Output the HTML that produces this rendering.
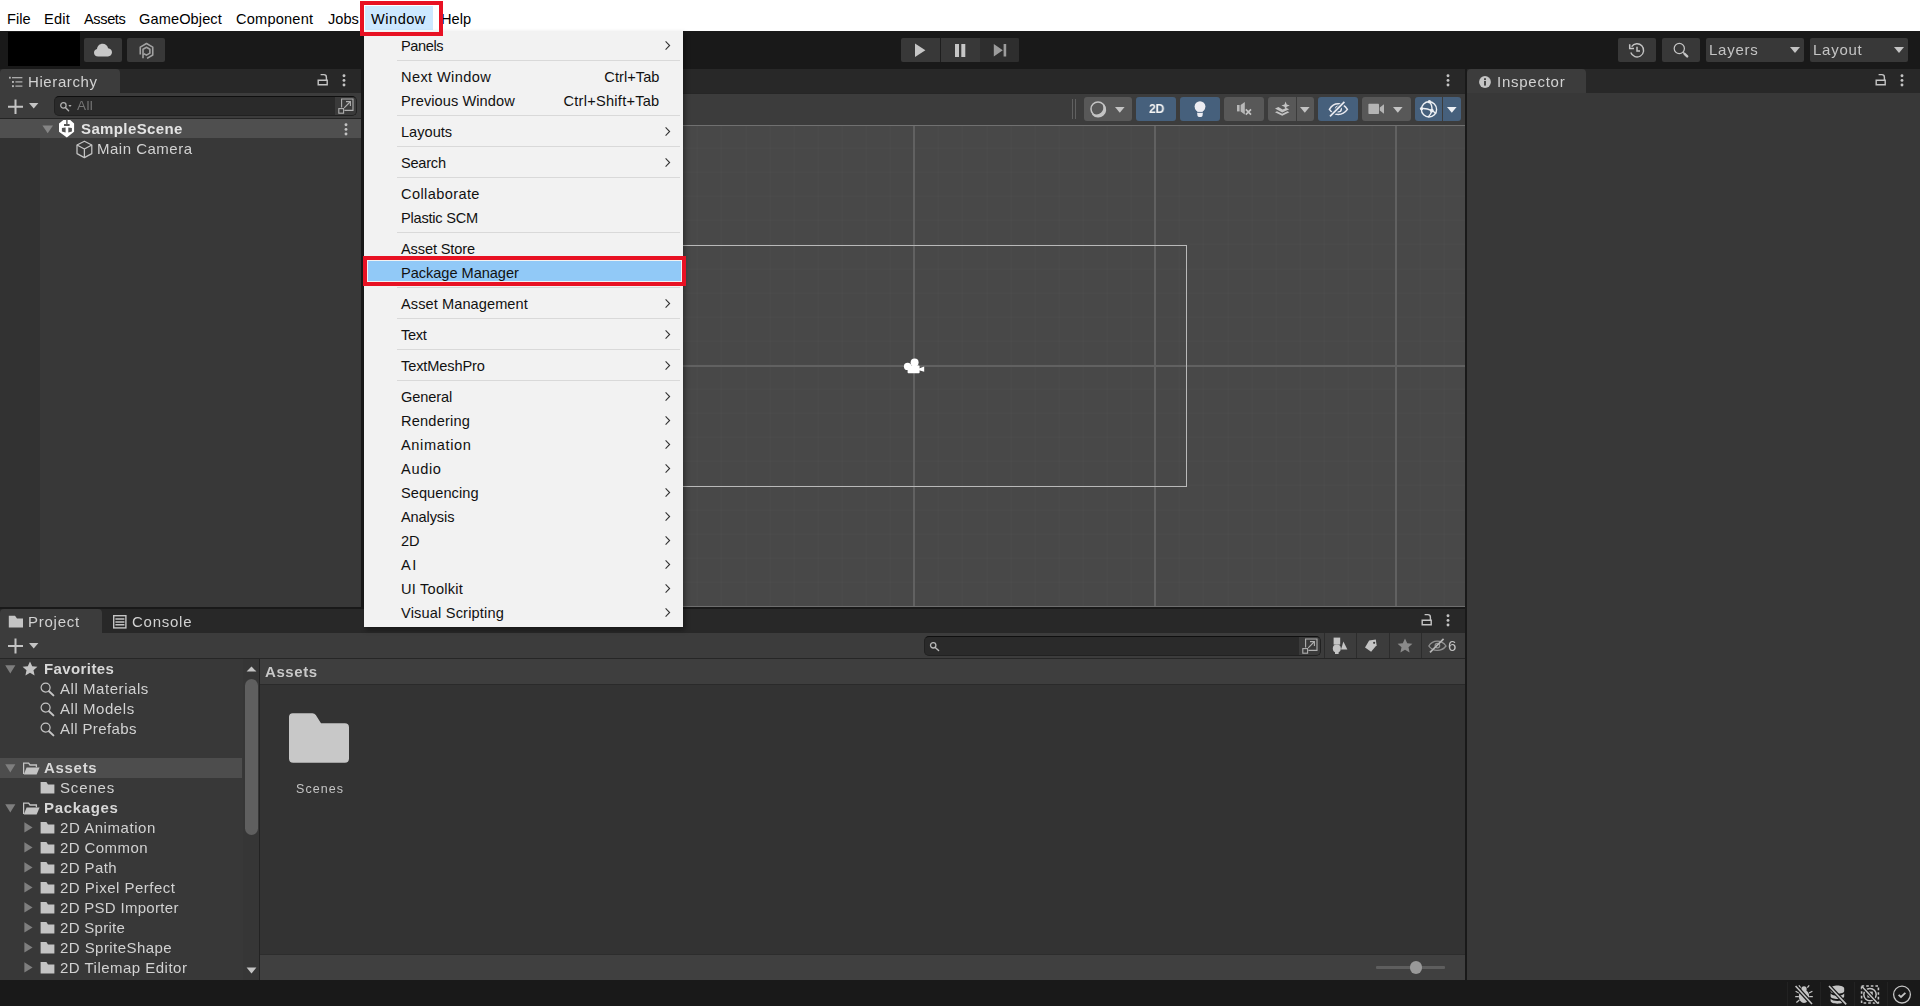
<!DOCTYPE html>
<html lang="en">
<head>
<meta charset="utf-8">
<title>Unity - Window - Package Manager</title>
<style>
*{box-sizing:border-box;margin:0;padding:0}
html,body{width:1920px;height:1006px;overflow:hidden;background:#191919}
body{position:relative;font-family:"Liberation Sans",sans-serif;font-size:15px;color:#d2d2d2;-webkit-font-smoothing:antialiased}
.abs{position:absolute}
.t{position:absolute;white-space:nowrap;line-height:20px;height:20px}
/* menubar */
#menubar{left:0;top:0;width:1920px;height:31px;background:#fff}
#menubar .t{color:#000;font-size:14.6px;top:9px}
/* app toolbar */
#apptb{left:0;top:31px;width:1920px;height:38px;background:#191919}
.tbtn{position:absolute;background:#383838;border-radius:2px}
/* panels */
.panel{position:absolute;background:#383838}
.panel .t,#apptb .t{will-change:transform}
.tabstrip{position:absolute;left:0;top:0;right:0;height:24px;background:#282828}
.tab{position:absolute;top:0;height:24px;background:#3c3c3c;border-radius:4px 4px 0 0}
.ptb{position:absolute;left:0;right:0;background:#3c3c3c}
.ui{letter-spacing:.55px;color:#d2d2d2}
.sbtn{position:absolute;top:97px;height:24px;border-radius:3px;background:#585858}
.sbtn.on{background:#46607c}
/* menu */
#menu{left:364px;top:31px;width:319px;height:596px;background:#f2f2f2;box-shadow:2px 3px 5px rgba(0,0,0,.38)}
#menu .t{color:#111;font-size:14.6px;left:37px}
#menu .sc{left:auto;right:23.5px}
#menu .sep{position:absolute;left:33px;width:283px;height:1px;background:#d9d9d9}
#menu .arr{position:absolute;left:300px;width:7px;height:11px}
</style>
</head>
<body>

<!-- ============ MENUBAR ============ -->
<div id="menubar" class="abs">
  <span class="t" style="left:7px">File</span>
  <span class="t" style="left:44px;letter-spacing:0.25px">Edit</span>
  <span class="t" style="left:84px;letter-spacing:-0.4px">Assets</span>
  <span class="t" style="left:139px;letter-spacing:0.1px">GameObject</span>
  <span class="t" style="left:236px;letter-spacing:0.2px">Component</span>
  <span class="t" style="left:328px">Jobs</span>
  <div class="abs" style="left:365px;top:6px;width:68px;height:24px;background:#cce8ff"></div>
  <span class="t" style="left:371px;letter-spacing:0.5px">Window</span>
  <span class="t" style="left:441px">Help</span>
</div>

<!-- ============ APP TOOLBAR ============ -->
<div id="apptb" class="abs">
  <div class="abs" style="left:8px;top:1px;width:72px;height:34px;background:#000"></div>
  <div class="tbtn" style="left:84px;top:7px;width:38px;height:24px">
    <svg class="abs" style="left:9px;top:5px" width="20" height="14" viewBox="0 0 20 14"><path d="M5.2 13.4 C2.6 13.4 1 11.8 1 9.7 C1 7.8 2.3 6.4 4 6.1 C4.3 3 6.6 .8 9.6 .8 C12.3 .8 14.5 2.6 15.1 5.2 C17.4 5.4 19 7 19 9.3 C19 11.6 17.3 13.4 15 13.4 Z" fill="#c8c8c8"/></svg>
  </div>
  <div class="tbtn" style="left:127px;top:7px;width:38px;height:24px">
    <svg class="abs" style="left:10.5px;top:4px" width="17" height="18" viewBox="0 0 18 19"><g fill="none" stroke="#a2a2a2" stroke-width="1.7" stroke-linejoin="round"><path d="M9.6 17.3 L15.6 13.8 V5.4 L9 1.6 L2.4 5.4 V13.2"/><path d="M5.3 17.2 V7.6 L9 5.5 L12.6 7.6 V11.8 L9 13.9 L6.2 12.4"/></g></svg>
  </div>
  <div class="tbtn" style="left:901px;top:7px;width:118px;height:24px;overflow:hidden">
    <div class="abs" style="left:39px;top:0;width:1px;height:24px;background:#1e1e1e"></div>
    <div class="abs" style="left:79px;top:0;width:39px;height:24px;background:#2e2e2e"></div>
    <svg class="abs" style="left:0;top:0" width="118" height="24" viewBox="0 0 118 24"><path d="M14 5.6 V19 L24.4 12.3 Z" fill="#c6c6c6"/><path d="M54 6 h4 v13 h-4 Z M60.3 6 h4 v13 h-4 Z" fill="#c6c6c6"/><path d="M92.8 6 V18.6 L101.8 12.3 Z M102.6 6 h2.6 v12.6 h-2.6 Z" fill="#9c9c9c"/></svg>
  </div>
  <div class="tbtn" style="left:1618px;top:7px;width:38px;height:24px">
    <svg class="abs" style="left:10px;top:4px" width="18" height="17" viewBox="0 0 18 17"><g fill="none" stroke="#c4c4c4" stroke-width="1.4"><path d="M3.6 4.6 A6.6 6.6 0 1 1 2.8 10.6"/><path d="M9 4.8 V9 H12" stroke-width="1.5"/></g><path d="M1.7 2.2 V6.6 H6" fill="none" stroke="#c4c4c4" stroke-width="1.5"/></svg>
  </div>
  <div class="tbtn" style="left:1662px;top:7px;width:38px;height:24px">
    <svg class="abs" style="left:10px;top:4px" width="18" height="17" viewBox="0 0 18 17"><circle cx="7.3" cy="6.5" r="5.1" fill="none" stroke="#c4c4c4" stroke-width="1.25"/><path d="M10.9 10.1 L12.4 11.6" stroke="#c4c4c4" stroke-width="1.2"/><path d="M12.6 11.8 L15.2 14.4" stroke="#c4c4c4" stroke-width="2.4" stroke-linecap="round"/></svg>
  </div>
  <div class="tbtn" style="left:1706px;top:7px;width:98px;height:24px">
    <span class="t ui" style="left:3px;top:2px;color:#c4c4c4;letter-spacing:.75px">Layers</span>
    <svg class="abs" style="left:84px;top:9px" width="10" height="6" viewBox="0 0 10 6"><path d="M0 0 H10 L5 6 Z" fill="#c4c4c4"/></svg>
  </div>
  <div class="tbtn" style="left:1810px;top:7px;width:98px;height:24px">
    <span class="t ui" style="left:3px;top:2px;color:#c4c4c4;letter-spacing:.75px">Layout</span>
    <svg class="abs" style="left:84px;top:9px" width="10" height="6" viewBox="0 0 10 6"><path d="M0 0 H10 L5 6 Z" fill="#c4c4c4"/></svg>
  </div>
</div>

<!-- ============ HIERARCHY ============ -->
<div id="hier" class="panel" style="left:0;top:69px;width:361px;height:538px">
  <div class="abs" style="left:0;top:69px;width:40px;height:469px;background:#323232"></div>
  <div class="tabstrip"></div>
  <div class="tab" style="left:0;width:120px">
    <svg class="abs" style="left:9px;top:7px" width="14" height="12" viewBox="0 0 14 12"><g fill="#b6b6b6"><rect x="0" y=".8" width="1.8" height="1.8"/><rect x="3" y="1.1" width="10.4" height="1.2"/><rect x="3" y="5" width="1.9" height="1.9"/><rect x="6.4" y="5.3" width="7" height="1.2"/><rect x="3" y="9.2" width="1.9" height="1.9"/><rect x="6.4" y="9.5" width="7" height="1.2"/></g></svg>
    <span class="t ui" style="left:28px;top:3px;letter-spacing:.6px">Hierarchy</span>
  </div>
  <svg class="abs" style="left:317px;top:4px" width="12" height="13" viewBox="0 0 12 13"><path d="M1.2 7.2 H10.2 V11.8 H1.2 Z" fill="none" stroke="#c4c4c4" stroke-width="1.4"/><path d="M9.4 7 V4.2 A2.6 2.6 0 0 0 6.8 1.6 H3.6" fill="none" stroke="#c4c4c4" stroke-width="1.4"/></svg>
  <svg class="abs" style="left:342px;top:5px" width="4" height="13" viewBox="0 0 4 13"><circle cx="2" cy="1.8" r="1.45" fill="#c4c4c4"/><circle cx="2" cy="6.4" r="1.45" fill="#c4c4c4"/><circle cx="2" cy="11" r="1.45" fill="#c4c4c4"/></svg>
  <div class="ptb" style="top:24px;height:26px;border-bottom:1px solid #242424"></div>
  <svg class="abs" style="left:7px;top:30px" width="17" height="16" viewBox="0 0 17 16"><path d="M8.5 .6 V15 M1 7.8 H16" stroke="#c4c4c4" stroke-width="2" fill="none"/></svg>
  <svg class="abs" style="left:29px;top:34px" width="10" height="6" viewBox="0 0 10 6"><path d="M0 0 H9.4 L4.7 5.4 Z" fill="#c4c4c4"/></svg>
  <div class="abs" style="left:54px;top:27px;width:303px;height:20px;background:#2a2a2a;border:1px solid #212121;border-top-color:#0f0f0f;border-radius:5px;overflow:hidden">
    <div class="abs" style="left:280px;top:0;width:22px;height:18px;background:#3a3a3a"></div>
  </div>
  <svg class="abs" style="left:59px;top:32px" width="14" height="11" viewBox="0 0 14 11"><circle cx="4.4" cy="4.4" r="2.7" fill="none" stroke="#b0b0b0" stroke-width="1.25"/><path d="M6.4 6.6 L9.6 9.8" stroke="#b0b0b0" stroke-width="1.4" stroke-linecap="round"/><path d="M9.4 4 H12.6 L11 5.9 Z" fill="#b0b0b0"/></svg>
  <span class="t" style="left:77px;top:27px;font-size:13.5px;color:#757575;letter-spacing:.4px">All</span>
  <svg class="abs" style="left:338px;top:29px" width="16" height="16" viewBox="0 0 16 16"><g fill="none" stroke="#b0b0b0" stroke-width="1.1"><path d="M3.6 9.6 V1 H15 V12.4 H6.4"/><rect x=".8" y="10.6" width="4.8" height="4.6"/><path d="M6.2 9.8 L12 4"/><path d="M8 3.6 H12.4 V8"/></g></svg>

  <div class="abs" style="left:0;top:50px;width:361px;height:19px;background:#4f4f4f"></div>
  <svg class="abs" style="left:42px;top:56px" width="12" height="9" viewBox="0 0 12 9"><path d="M.4 .4 H11 L5.7 8.2 Z" fill="#858585"/></svg>
  <svg class="abs" style="left:58px;top:50px" width="18" height="19" viewBox="0 0 18 19"><path d="M5.4 1 H12.2 L16.1 4.6 V12.8 L12.6 15.4 L8.8 18.6 L4.8 15.4 L1 12.8 V4.6 Z" fill="#fff"/><path d="M8.2 .6 H9.6 V4.9 H11.6 V7 H6 V4.9 H8.2 Z" fill="#555"/><path d="M3.9 9 L7.6 8.6 V13.6 L3.9 12.6 Z M13.9 9 L10.3 8.6 V13.6 L13.9 12.6 Z" fill="#555"/></svg>
  <span class="t" style="left:81px;top:50px;font-weight:bold;color:#e4e4e4;letter-spacing:.38px">SampleScene</span>
  <svg class="abs" style="left:344px;top:54px" width="4" height="13" viewBox="0 0 4 13"><circle cx="2" cy="1.8" r="1.45" fill="#c4c4c4"/><circle cx="2" cy="6.4" r="1.45" fill="#c4c4c4"/><circle cx="2" cy="11" r="1.45" fill="#c4c4c4"/></svg>
  <svg class="abs" style="left:75px;top:71px" width="19" height="19" viewBox="0 0 19 19"><g fill="none" stroke="#c4c4c4" stroke-width="1.25" stroke-linejoin="round"><path d="M9.4 1.2 L16.8 5 V13.6 L9.4 17.6 L2 13.6 V5 Z"/><path d="M2 5 L9.4 9 L16.8 5 M9.4 9 V17.6"/></g></svg>
  <span class="t ui" style="left:97px;top:70px;letter-spacing:.5px">Main Camera</span>
</div>

<!-- ============ SCENE ============ -->
<div id="scene" class="panel" style="left:364px;top:69px;width:1101px;height:538px;background:#484848;overflow:hidden">
  <!-- grid -->
  <div class="abs" style="left:0;top:56px;width:1101px;height:482px;background-image:repeating-linear-gradient(90deg,rgba(255,255,255,.014) 0,rgba(255,255,255,.014) 1px,transparent 1px,transparent 24.1px),repeating-linear-gradient(0deg,rgba(255,255,255,.014) 0,rgba(255,255,255,.014) 1px,transparent 1px,transparent 24.1px);background-position:19.8px 0,0 -0.4px"></div>
  <div class="abs" style="left:308px;top:56px;width:2px;height:482px;background:#616161"></div>
  <div class="abs" style="left:549px;top:56px;width:2px;height:482px;background:#616161"></div>
  <div class="abs" style="left:790px;top:56px;width:2px;height:482px;background:#616161"></div>
  <div class="abs" style="left:1031px;top:56px;width:2px;height:482px;background:#616161"></div>
  <div class="abs" style="left:0;top:56px;width:1101px;height:1px;background:#707070"></div>
  <div class="abs" style="left:0;top:296px;width:1101px;height:2px;background:#616161"></div>
  <div class="abs" style="left:0;top:537px;width:1101px;height:1px;background:#6e6e6e"></div>
  <!-- camera frustum rect -->
  <div class="abs" style="left:278px;top:176px;width:545px;height:242px;border:1px solid #b9b9b9"></div>
  <!-- camera gizmo -->
  <svg class="abs" style="left:538px;top:288px" width="24" height="18" viewBox="0 0 24 18"><g fill="#fff"><circle cx="5.6" cy="9.4" r="3.7"/><circle cx="12.6" cy="5.6" r="4"/><rect x="5.6" y="8.6" width="12" height="7.6" rx=".8"/><path d="M17 11.4 L22.2 9.6 V14.8 L17 13.2 Z"/></g></svg>

  <div class="tabstrip"></div>
  <svg class="abs" style="left:1082px;top:5px" width="4" height="13" viewBox="0 0 4 13"><circle cx="2" cy="1.8" r="1.45" fill="#c4c4c4"/><circle cx="2" cy="6.4" r="1.45" fill="#c4c4c4"/><circle cx="2" cy="11" r="1.45" fill="#c4c4c4"/></svg>
  <div class="ptb" style="top:24px;height:32px;border-top:1px solid #262626"></div>
  <div class="abs" style="left:708px;top:30px;width:1px;height:20px;background:#606060"></div>
  <div class="abs" style="left:711px;top:30px;width:1px;height:20px;background:#606060"></div>

  <div class="sbtn" style="left:720px;top:28px;width:48px">
    <svg class="abs" style="left:5px;top:3px" width="18" height="18" viewBox="0 0 18 18"><circle cx="9" cy="9" r="7" fill="none" stroke="#c4c4c4" stroke-width="1.5"/><path d="M14.6 5 A7 7 0 0 1 4 14.4 A7.6 7.6 0 0 0 14.6 5 Z" fill="#c4c4c4" stroke="#c4c4c4" stroke-width="1.6" stroke-linejoin="round"/></svg>
    <svg class="abs" style="left:31px;top:10px" width="10" height="6" viewBox="0 0 10 6"><path d="M0 0 H9.6 L4.8 5.8 Z" fill="#c4c4c4"/></svg>
  </div>
  <div class="sbtn on" style="left:772px;top:28px;width:40px">
    <span class="t" style="left:12.5px;top:2px;font-weight:bold;font-size:13.6px;color:#f4f4f4;letter-spacing:-.3px;transform:scaleX(.9);transform-origin:0 50%">2D</span>
  </div>
  <div class="sbtn on" style="left:816px;top:28px;width:40px">
    <svg class="abs" style="left:12px;top:3px" width="16" height="18" viewBox="0 0 16 18"><circle cx="8" cy="6.6" r="5.4" fill="#ececf2"/><rect x="5.4" y="10" width="5.2" height="4" fill="#ececf2"/><circle cx="8" cy="14.4" r="2.7" fill="#ececf2"/><path d="M5.2 12.4 H10.8" stroke="#46607c" stroke-width=".9"/></svg>
  </div>
  <div class="sbtn" style="left:860px;top:28px;width:40px">
    <svg class="abs" style="left:12px;top:4px" width="18" height="16" viewBox="0 0 18 16"><g fill="#b8b8b8"><rect x="1" y="4" width="2.6" height="6.4"/><path d="M4.6 4 L8.8 1 V13.4 L4.6 10.4 Z"/></g><path d="M9.8 8.4 L15 13.6 M15 8.4 L9.8 13.6" stroke="#c4c4c4" stroke-width="1.7"/></svg>
  </div>
  <div class="sbtn" style="left:904px;top:28px;width:46px">
    <div class="abs" style="left:28px;top:0;width:1px;height:24px;background:#3c3c3c"></div>
    <svg class="abs" style="left:6px;top:4px" width="17" height="16" viewBox="0 0 17 16"><g fill="#c4c4c4"><path d="M11.6 .4 L12.7 3.5 L15.8 4.6 L12.7 5.7 L11.6 8.8 L10.5 5.7 L7.4 4.6 L10.5 3.5 Z"/><path d="M1 7.6 L4.4 6 L8.6 8.6 L12.4 7 L15.2 8.2 L8.2 11.4 Z"/><path d="M1 11.2 L3 10.2 L8.2 12.8 L13.4 10.2 L15.4 11.2 L8.2 14.8 Z"/></g></svg>
    <svg class="abs" style="left:32px;top:10px" width="10" height="6" viewBox="0 0 10 6"><path d="M0 0 H9.6 L4.8 5.8 Z" fill="#c4c4c4"/></svg>
  </div>
  <div class="sbtn on" style="left:954px;top:28px;width:40px">
    <svg class="abs" style="left:10px;top:4px" width="21" height="16" viewBox="0 0 21 16"><path d="M1.4 8.4 C4 4 7 2.8 10.2 2.8 C13.6 2.8 16.8 4.4 19.4 8.4 C16.8 12 13.6 13.4 10.2 13.4 C7 13.4 4 12.2 1.4 8.4 Z" fill="none" stroke="#eaeaf0" stroke-width="1.5"/><circle cx="10.4" cy="8" r="2.9" fill="none" stroke="#eaeaf0" stroke-width="1.4"/><path d="M2.6 14.8 L16.6 1" stroke="#46607c" stroke-width="4"/><path d="M2 15.4 L16.4 .8" stroke="#eaeaf0" stroke-width="1.7"/></svg>
  </div>
  <div class="sbtn" style="left:998px;top:28px;width:49px">
    <svg class="abs" style="left:6px;top:6px" width="17" height="12" viewBox="0 0 17 12"><rect x=".4" y=".8" width="10.6" height="10.2" rx=".8" fill="#b4b4b4"/><path d="M11.8 4.4 L16 1.2 V10.8 L11.8 7.6 Z" fill="#b4b4b4"/></svg>
    <svg class="abs" style="left:31px;top:10px" width="10" height="6" viewBox="0 0 10 6"><path d="M0 0 H9.6 L4.8 5.8 Z" fill="#c4c4c4"/></svg>
  </div>
  <div class="sbtn on" style="left:1051px;top:28px;width:46px">
    <div class="abs" style="left:27px;top:0;width:1px;height:24px;background:#3c3c3c"></div>
    <svg class="abs" style="left:4px;top:2px" width="20" height="20" viewBox="0 0 20 20"><g fill="none" stroke="#eef0f4" stroke-width="1.4"><circle cx="10" cy="10.4" r="7.6"/><path d="M10.4 2.8 C13 5.6 13.4 8 12.8 11.6 C12.2 14.6 10.6 16.6 9.2 18"/><path d="M2.4 9.6 C5.4 9.2 9 9.8 12.8 11.6 C14.6 12.4 16 13.4 17 14.6"/></g><g fill="#eef0f4"><circle cx="10.4" cy="2.8" r="1.7"/><circle cx="2.6" cy="9.6" r="1.7"/><circle cx="12.8" cy="11.6" r="1.9"/></g></svg>
    <svg class="abs" style="left:32px;top:10px" width="10" height="6" viewBox="0 0 10 6"><path d="M0 0 H9.6 L4.8 5.8 Z" fill="#eef0f4"/></svg>
  </div>
</div>

<!-- ============ INSPECTOR ============ -->
<div id="insp" class="panel" style="left:1467px;top:69px;width:453px;height:911px">
  <div class="tabstrip"></div>
  <div class="tab" style="left:0;width:119px">
    <svg class="abs" style="left:12px;top:7px" width="12" height="12" viewBox="0 0 13 13"><circle cx="6.5" cy="6.5" r="6.4" fill="#c4c4c4"/><rect x="5.5" y="5.4" width="2" height="5" fill="#3c3c3c"/><rect x="5.5" y="2.4" width="2" height="2" fill="#3c3c3c"/></svg>
    <span class="t ui" style="left:30px;top:3px;letter-spacing:.75px">Inspector</span>
  </div>
  <svg class="abs" style="left:408px;top:4px" width="12" height="13" viewBox="0 0 12 13"><path d="M1.2 7.2 H10.2 V11.8 H1.2 Z" fill="none" stroke="#c4c4c4" stroke-width="1.4"/><path d="M9.4 7 V4.2 A2.6 2.6 0 0 0 6.8 1.6 H3.6" fill="none" stroke="#c4c4c4" stroke-width="1.4"/></svg>
  <svg class="abs" style="left:433px;top:5px" width="4" height="13" viewBox="0 0 4 13"><circle cx="2" cy="1.8" r="1.45" fill="#c4c4c4"/><circle cx="2" cy="6.4" r="1.45" fill="#c4c4c4"/><circle cx="2" cy="11" r="1.45" fill="#c4c4c4"/></svg>
</div>

<!-- ============ PROJECT ============ -->
<div id="proj" class="panel" style="left:0;top:609px;width:1465px;height:371px">
  <div class="tabstrip"></div>
  <div class="tab" style="left:0;width:102px">
    <svg class="abs" style="left:8px;top:6px" width="16" height="13" viewBox="0 0 16 13"><path d="M.8 .8 H7 L9 3.6 H15 V12.6 H.8 Z" fill="#c4c4c4"/></svg>
    <span class="t ui" style="left:28px;top:3px;letter-spacing:.75px">Project</span>
  </div>
  <svg class="abs" style="left:113px;top:6px" width="14" height="14" viewBox="0 0 14 14"><rect x=".7" y=".7" width="12.2" height="12.2" fill="none" stroke="#c4c4c4" stroke-width="1.4"/><path d="M2.4 4 H11.4 M2.4 6.9 H11.4 M2.4 9.8 H11.4" stroke="#c4c4c4" stroke-width="1.5"/></svg>
  <span class="t ui" style="left:132px;top:3px;letter-spacing:.75px">Console</span>
  <svg class="abs" style="left:1421px;top:4px" width="12" height="13" viewBox="0 0 12 13"><path d="M1.2 7.2 H10.2 V11.8 H1.2 Z" fill="none" stroke="#c4c4c4" stroke-width="1.4"/><path d="M9.4 7 V4.2 A2.6 2.6 0 0 0 6.8 1.6 H3.6" fill="none" stroke="#c4c4c4" stroke-width="1.4"/></svg>
  <svg class="abs" style="left:1446px;top:5px" width="4" height="13" viewBox="0 0 4 13"><circle cx="2" cy="1.8" r="1.45" fill="#c4c4c4"/><circle cx="2" cy="6.4" r="1.45" fill="#c4c4c4"/><circle cx="2" cy="11" r="1.45" fill="#c4c4c4"/></svg>
  <div class="ptb" style="top:24px;height:26px;border-bottom:1px solid #262626"></div>
  <svg class="abs" style="left:7px;top:29px" width="17" height="16" viewBox="0 0 17 16"><path d="M8.5 .6 V15.6 M1 8.1 H16" stroke="#c4c4c4" stroke-width="2" fill="none"/></svg>
  <svg class="abs" style="left:29px;top:34px" width="10" height="6" viewBox="0 0 10 6"><path d="M0 0 H9.4 L4.7 5.4 Z" fill="#c4c4c4"/></svg>
  <div class="abs" style="left:924px;top:27px;width:397px;height:20px;background:#2a2a2a;border:1px solid #212121;border-top-color:#0f0f0f;border-radius:5px;overflow:hidden">
    <div class="abs" style="left:374px;top:0;width:22px;height:18px;background:#3a3a3a"></div>
  </div>
  <svg class="abs" style="left:929px;top:32px" width="12" height="11" viewBox="0 0 12 11"><circle cx="4.2" cy="4.3" r="2.7" fill="none" stroke="#b8b8b8" stroke-width="1.3"/><path d="M6.2 6.4 L9.6 9.6" stroke="#b8b8b8" stroke-width="1.4" stroke-linecap="round"/></svg>
  <svg class="abs" style="left:1302px;top:29px" width="16" height="16" viewBox="0 0 16 16"><g fill="none" stroke="#b0b0b0" stroke-width="1.1"><path d="M3.6 9.6 V1 H15 V12.4 H6.4"/><rect x=".8" y="10.6" width="4.8" height="4.6"/><path d="M6.2 9.8 L12 4"/><path d="M8 3.6 H12.4 V8"/></g></svg>
  <!-- toolbar buttons -->
  <div class="abs" style="left:1324px;top:24px;width:1px;height:25px;background:#2c2c2c"></div>
  <div class="abs" style="left:1356px;top:24px;width:1px;height:25px;background:#2c2c2c"></div>
  <div class="abs" style="left:1389px;top:24px;width:1px;height:25px;background:#2c2c2c"></div>
  <div class="abs" style="left:1421px;top:24px;width:1px;height:25px;background:#2c2c2c"></div>
  <svg class="abs" style="left:1331px;top:28px" width="17" height="17" viewBox="0 0 17 17"><g fill="#c4c4c4"><rect x="2.6" y=".6" width="6.6" height="7"/><circle cx="5.8" cy="11.6" r="4"/><rect x="4" y="15" width="3.6" height="2"/><path d="M12.4 4.4 L16.4 12.4 H10 Z"/></g></svg>
  <svg class="abs" style="left:1364px;top:30px" width="14.5" height="13.6" viewBox="0 0 16 15"><path d="M6.6 1.4 H14 V7.6 L7 14 L1 8.4 Z" fill="#c4c4c4" transform="rotate(-8 8 8)"/><circle cx="11.2" cy="4.2" r="1.2" fill="#3c3c3c"/></svg>
  <svg class="abs" style="left:1397px;top:29px" width="16" height="15" viewBox="0 0 16 15"><path d="M8 .4 L10.2 5.2 L15.4 5.8 L11.5 9.3 L12.6 14.4 L8 11.8 L3.4 14.4 L4.5 9.3 L.6 5.8 L5.8 5.2 Z" fill="#8a8a8a"/></svg>
  <svg class="abs" style="left:1427px;top:28px" width="21" height="17" viewBox="0 0 21 17"><path d="M1.8 9 C4.2 5.4 7 4.2 10.2 4.2 C13.6 4.2 16.6 5.6 19 9 C16.6 12.2 13.6 13.4 10.2 13.4 C7 13.4 4.2 12.4 1.8 9 Z" fill="none" stroke="#929292" stroke-width="1.3"/><circle cx="10.4" cy="8.6" r="2.3" fill="none" stroke="#929292" stroke-width="1.2"/><path d="M3 15.4 L16.6 1.8" stroke="#b4b4b4" stroke-width="1.7"/></svg>
  <span class="t" style="left:1448px;top:27px;color:#c4c4c4;font-size:15px">6</span>

  <!-- tree -->
  <svg class="abs" style="left:5px;top:56px" width="11" height="9" viewBox="0 0 11 9"><path d="M.2 .2 H10.4 L5.3 8.6 Z" fill="#7e7e7e"/></svg><svg class="abs" style="left:22px;top:52px" width="16" height="15" viewBox="0 0 16 15"><path d="M8 .4 L10.2 5.2 L15.4 5.8 L11.5 9.3 L12.6 14.4 L8 11.8 L3.4 14.4 L4.5 9.3 L.6 5.8 L5.8 5.2 Z" fill="#c4c4c4"/></svg><span class="t ui" style="left:44px;top:50px;font-weight:bold;color:#d8d8d8;letter-spacing:0.4px">Favorites</span>
  <svg class="abs" style="left:40px;top:73px" width="15" height="15" viewBox="0 0 15 15"><circle cx="5.6" cy="5.6" r="4.5" fill="none" stroke="#c4c4c4" stroke-width="1.2"/><path d="M9 9.2 L13.4 13.4" stroke="#c4c4c4" stroke-width="2" stroke-linecap="round"/></svg><span class="t ui" style="left:60px;top:70px;letter-spacing:0.55px">All Materials</span>
  <svg class="abs" style="left:40px;top:93px" width="15" height="15" viewBox="0 0 15 15"><circle cx="5.6" cy="5.6" r="4.5" fill="none" stroke="#c4c4c4" stroke-width="1.2"/><path d="M9 9.2 L13.4 13.4" stroke="#c4c4c4" stroke-width="2" stroke-linecap="round"/></svg><span class="t ui" style="left:60px;top:90px;letter-spacing:0.55px">All Models</span>
  <svg class="abs" style="left:40px;top:113px" width="15" height="15" viewBox="0 0 15 15"><circle cx="5.6" cy="5.6" r="4.5" fill="none" stroke="#c4c4c4" stroke-width="1.2"/><path d="M9 9.2 L13.4 13.4" stroke="#c4c4c4" stroke-width="2" stroke-linecap="round"/></svg><span class="t ui" style="left:60px;top:110px;letter-spacing:0.4px">All Prefabs</span>
  <div class="abs" style="left:0;top:149px;width:242px;height:20px;background:#4d4d4d"></div>
  <svg class="abs" style="left:5px;top:155px" width="11" height="9" viewBox="0 0 11 9"><path d="M.2 .2 H10.4 L5.3 8.6 Z" fill="#7e7e7e"/></svg><svg class="abs" style="left:23px;top:153px" width="17" height="13" viewBox="0 0 17 13"><path d="M.6 12 V1.2 H5.6 L7 3 H13.4 V5.2" fill="none" stroke="#c4c4c4" stroke-width="1.3"/><path d="M3.6 5.6 H16.6 L13.6 12.4 H.8 Z" fill="#c4c4c4"/></svg><span class="t ui" style="left:44px;top:149px;font-weight:bold;color:#d8d8d8;letter-spacing:.7px">Assets</span>
  <svg class="abs" style="left:40px;top:172px" width="15" height="13" viewBox="0 0 15 13"><path d="M.6 1 H6.4 L8 3.4 H14.4 V12.4 H.6 Z" fill="#c4c4c4"/></svg><span class="t ui" style="left:60px;top:169px;letter-spacing:.85px">Scenes</span>
  <svg class="abs" style="left:5px;top:195px" width="11" height="9" viewBox="0 0 11 9"><path d="M.2 .2 H10.4 L5.3 8.6 Z" fill="#7e7e7e"/></svg><svg class="abs" style="left:23px;top:193px" width="17" height="13" viewBox="0 0 17 13"><path d="M.6 12 V1.2 H5.6 L7 3 H13.4 V5.2" fill="none" stroke="#c4c4c4" stroke-width="1.3"/><path d="M3.6 5.6 H16.6 L13.6 12.4 H.8 Z" fill="#c4c4c4"/></svg><span class="t ui" style="left:44px;top:189px;font-weight:bold;color:#d8d8d8;letter-spacing:.67px">Packages</span>
  <svg class="abs" style="left:24px;top:213px" width="9" height="11" viewBox="0 0 9 11"><path d="M.4 .3 V10.5 L8.6 5.4 Z" fill="#7e7e7e"/></svg><svg class="abs" style="left:40px;top:212px" width="15" height="13" viewBox="0 0 15 13"><path d="M.6 1 H6.4 L8 3.4 H14.4 V12.4 H.6 Z" fill="#c4c4c4"/></svg><span class="t ui" style="left:60px;top:209px;letter-spacing:0.55px">2D Animation</span>
  <svg class="abs" style="left:24px;top:233px" width="9" height="11" viewBox="0 0 9 11"><path d="M.4 .3 V10.5 L8.6 5.4 Z" fill="#7e7e7e"/></svg><svg class="abs" style="left:40px;top:232px" width="15" height="13" viewBox="0 0 15 13"><path d="M.6 1 H6.4 L8 3.4 H14.4 V12.4 H.6 Z" fill="#c4c4c4"/></svg><span class="t ui" style="left:60px;top:229px;letter-spacing:.42px">2D Common</span>
  <svg class="abs" style="left:24px;top:253px" width="9" height="11" viewBox="0 0 9 11"><path d="M.4 .3 V10.5 L8.6 5.4 Z" fill="#7e7e7e"/></svg><svg class="abs" style="left:40px;top:252px" width="15" height="13" viewBox="0 0 15 13"><path d="M.6 1 H6.4 L8 3.4 H14.4 V12.4 H.6 Z" fill="#c4c4c4"/></svg><span class="t ui" style="left:60px;top:249px;letter-spacing:.4px">2D Path</span>
  <svg class="abs" style="left:24px;top:273px" width="9" height="11" viewBox="0 0 9 11"><path d="M.4 .3 V10.5 L8.6 5.4 Z" fill="#7e7e7e"/></svg><svg class="abs" style="left:40px;top:272px" width="15" height="13" viewBox="0 0 15 13"><path d="M.6 1 H6.4 L8 3.4 H14.4 V12.4 H.6 Z" fill="#c4c4c4"/></svg><span class="t ui" style="left:60px;top:269px;letter-spacing:.5px">2D Pixel Perfect</span>
  <svg class="abs" style="left:24px;top:293px" width="9" height="11" viewBox="0 0 9 11"><path d="M.4 .3 V10.5 L8.6 5.4 Z" fill="#7e7e7e"/></svg><svg class="abs" style="left:40px;top:292px" width="15" height="13" viewBox="0 0 15 13"><path d="M.6 1 H6.4 L8 3.4 H14.4 V12.4 H.6 Z" fill="#c4c4c4"/></svg><span class="t ui" style="left:60px;top:289px;letter-spacing:.3px">2D PSD Importer</span>
  <svg class="abs" style="left:24px;top:313px" width="9" height="11" viewBox="0 0 9 11"><path d="M.4 .3 V10.5 L8.6 5.4 Z" fill="#7e7e7e"/></svg><svg class="abs" style="left:40px;top:312px" width="15" height="13" viewBox="0 0 15 13"><path d="M.6 1 H6.4 L8 3.4 H14.4 V12.4 H.6 Z" fill="#c4c4c4"/></svg><span class="t ui" style="left:60px;top:309px;letter-spacing:.3px">2D Sprite</span>
  <svg class="abs" style="left:24px;top:333px" width="9" height="11" viewBox="0 0 9 11"><path d="M.4 .3 V10.5 L8.6 5.4 Z" fill="#7e7e7e"/></svg><svg class="abs" style="left:40px;top:332px" width="15" height="13" viewBox="0 0 15 13"><path d="M.6 1 H6.4 L8 3.4 H14.4 V12.4 H.6 Z" fill="#c4c4c4"/></svg><span class="t ui" style="left:60px;top:329px;letter-spacing:0.44px">2D SpriteShape</span>
  <svg class="abs" style="left:24px;top:353px" width="9" height="11" viewBox="0 0 9 11"><path d="M.4 .3 V10.5 L8.6 5.4 Z" fill="#7e7e7e"/></svg><svg class="abs" style="left:40px;top:352px" width="15" height="13" viewBox="0 0 15 13"><path d="M.6 1 H6.4 L8 3.4 H14.4 V12.4 H.6 Z" fill="#c4c4c4"/></svg><span class="t ui" style="left:60px;top:349px;letter-spacing:.48px">2D Tilemap Editor</span>

  <!-- tree scrollbar -->
  <div class="abs" style="left:243px;top:50px;width:16px;height:321px;background:#363636"></div>
  <svg class="abs" style="left:246px;top:56px" width="11" height="7" viewBox="0 0 11 7"><path d="M5.5 1.4 L10.4 6.6 H.6 Z" fill="#c4c4c4"/></svg>
  <div class="abs" style="left:245px;top:70px;width:13px;height:156px;background:#5f5f5f;border-radius:7px"></div>
  <svg class="abs" style="left:246px;top:358px" width="11" height="7" viewBox="0 0 11 7"><path d="M5.5 6.4 L10.4 .6 H.6 Z" fill="#c4c4c4"/></svg>
  <div class="abs" style="left:259px;top:50px;width:1px;height:321px;background:#232323"></div>

  <!-- asset area -->
  <div class="abs" style="left:260px;top:50px;width:1205px;height:321px;background:#333"></div>
  <div class="abs" style="left:260px;top:50px;width:1205px;height:26px;background:#3e3e3e;border-bottom:1px solid #2a2a2a"></div>
  <span class="t ui" style="left:265px;top:53px;font-weight:bold;color:#c8c8c8;letter-spacing:.6px">Assets</span>
  <svg class="abs" style="left:288px;top:103px" width="62" height="52" viewBox="0 0 62 52"><path d="M1 5 Q1 1.2 4.8 1.2 H24.4 Q26.6 1.2 27.8 3 L33 11.2 H56.8 Q61 11.2 61 15.4 V46.6 Q61 50.8 56.8 50.8 H5.2 Q1 50.8 1 46.6 Z" fill="#c8c8c8"/></svg>
  <span class="t" style="left:296px;top:170px;font-size:12.5px;color:#c4c4c4;letter-spacing:1.05px">Scenes</span>
  <div class="abs" style="left:260px;top:345px;width:1205px;height:26px;background:#404040;border-top:1px solid #2d2d2d"></div>
  <div class="abs" style="left:1376px;top:357px;width:69px;height:3px;background:#5e5e5e;border-radius:1px"></div>
  <div class="abs" style="left:1409.7px;top:352.4px;width:12.4px;height:12.4px;background:#999;border-radius:50%"></div>
</div>

<!-- ============ STATUS BAR ============ -->
<div id="status" class="abs" style="left:0;top:980px;width:1920px;height:26px;background:#191919">
  <div class="abs" style="left:1787px;top:2px;width:1px;height:24px;background:#222"></div>
  <div class="abs" style="left:1820px;top:2px;width:1px;height:24px;background:#222"></div>
  <div class="abs" style="left:1854px;top:2px;width:1px;height:24px;background:#222"></div>
  <div class="abs" style="left:1887px;top:2px;width:1px;height:24px;background:#222"></div>
  <svg class="abs" style="left:1794px;top:4px" width="20" height="21" viewBox="0 0 20 21"><g fill="#c4c4c4"><ellipse cx="10" cy="12.4" rx="5.2" ry="6.6"/><circle cx="10" cy="5" r="2.7"/></g><g stroke="#c4c4c4" stroke-width="1.3" fill="none"><path d="M6.6 3.6 L4.8 1.4 M13.4 3.6 L15.2 1.4 M5 9 L1.6 7.2 M15 9 L18.4 7.2 M4.8 12.6 H1.2 M15.2 12.6 H18.8 M5.4 16 L2.4 18.4 M14.6 16 L17.6 18.4"/></g><path d="M2.2 2.6 L17.6 19.6" stroke="#191919" stroke-width="4"/><path d="M1.6 2 L18 20" stroke="#c4c4c4" stroke-width="1.6"/></svg>
  <svg class="abs" style="left:1828px;top:4px" width="20" height="21" viewBox="0 0 20 21"><g fill="#c4c4c4"><path d="M2.6 4.6 C2.6 .6 16.2 .6 16.2 4.6 V7 C16.2 10.6 2.6 10.6 2.6 7 Z"/><path d="M2.6 9.6 C5 12.6 13.8 12.6 16.2 9.6 V12.2 C16.2 15.8 2.6 15.8 2.6 12.2 Z"/><path d="M2.6 14.8 C5 17.8 13.8 17.8 16.2 14.8 V16.8 C16.2 20.6 2.6 20.6 2.6 16.8 Z"/></g><path d="M1.8 2.8 L17.8 19.8" stroke="#191919" stroke-width="4"/><path d="M1 2 L18.2 20.4" stroke="#c4c4c4" stroke-width="1.6"/></svg>
  <svg class="abs" style="left:1860px;top:4px" width="20" height="21" viewBox="0 0 20 21"><rect x="1.6" y="2" width="16.8" height="17" fill="none" stroke="#c4c4c4" stroke-width="1.6" stroke-dasharray="2.6 2"/><circle cx="10" cy="10.6" r="6.2" fill="none" stroke="#c4c4c4" stroke-width="1.5"/><path d="M7.4 7.6 H12.8 V13.6 H7.4 Z" fill="#c4c4c4"/><path d="M2.8 3.4 L17.2 18.6" stroke="#191919" stroke-width="3.6"/><path d="M2 2.6 L17.8 19.4" stroke="#c4c4c4" stroke-width="1.5"/></svg>
  <svg class="abs" style="left:1892px;top:4px" width="20" height="21" viewBox="0 0 20 21"><circle cx="10" cy="10.6" r="8.4" fill="none" stroke="#c4c4c4" stroke-width="1.3"/><path d="M6.6 10.8 L9 13 L13.4 8.8" fill="none" stroke="#c4c4c4" stroke-width="1.8"/></svg>
</div>

<!-- ============ MENU ============ -->
<div id="menu" class="abs">
  <div class="abs" style="left:4px;top:230px;width:313px;height:20px;background:#91c9f7"></div>
  <div class="sep" style="top:29px"></div>
  <div class="sep" style="top:84px"></div>
  <div class="sep" style="top:115px"></div>
  <div class="sep" style="top:146px"></div>
  <div class="sep" style="top:201px"></div>
  <div class="sep" style="top:256px"></div>
  <div class="sep" style="top:287px"></div>
  <div class="sep" style="top:318px"></div>
  <div class="sep" style="top:349px"></div>
  <span class="t" style="top:5px;letter-spacing:-0.4px">Panels</span>
  <svg class="arr" style="top:9px" viewBox="0 0 7 11"><path d="M1.6 1.4 L5.6 5.5 L1.6 9.6" fill="none" stroke="#333" stroke-width="1.1"/></svg>
  <span class="t" style="top:36px;letter-spacing:0.37px">Next Window</span>
  <span class="t sc" style="top:36px;letter-spacing:0.05px">Ctrl+Tab</span>
  <span class="t" style="top:60px;letter-spacing:0.07px">Previous Window</span>
  <span class="t sc" style="top:60px;letter-spacing:0.25px">Ctrl+Shift+Tab</span>
  <span class="t" style="top:91px">Layouts</span>
  <svg class="arr" style="top:95px" viewBox="0 0 7 11"><path d="M1.6 1.4 L5.6 5.5 L1.6 9.6" fill="none" stroke="#333" stroke-width="1.1"/></svg>
  <span class="t" style="top:122px;letter-spacing:-0.24px">Search</span>
  <svg class="arr" style="top:126px" viewBox="0 0 7 11"><path d="M1.6 1.4 L5.6 5.5 L1.6 9.6" fill="none" stroke="#333" stroke-width="1.1"/></svg>
  <span class="t" style="top:153px;letter-spacing:0.38px">Collaborate</span>
  <span class="t" style="top:177px;letter-spacing:-0.23px">Plastic SCM</span>
  <span class="t" style="top:208px;letter-spacing:-0.14px">Asset Store</span>
  <span class="t" style="top:232px;letter-spacing:-0.04px">Package Manager</span>
  <span class="t" style="top:263px;letter-spacing:0.07px">Asset Management</span>
  <svg class="arr" style="top:267px" viewBox="0 0 7 11"><path d="M1.6 1.4 L5.6 5.5 L1.6 9.6" fill="none" stroke="#333" stroke-width="1.1"/></svg>
  <span class="t" style="top:294px;letter-spacing:-0.33px">Text</span>
  <svg class="arr" style="top:298px" viewBox="0 0 7 11"><path d="M1.6 1.4 L5.6 5.5 L1.6 9.6" fill="none" stroke="#333" stroke-width="1.1"/></svg>
  <span class="t" style="top:325px;letter-spacing:-0.13px">TextMeshPro</span>
  <svg class="arr" style="top:329px" viewBox="0 0 7 11"><path d="M1.6 1.4 L5.6 5.5 L1.6 9.6" fill="none" stroke="#333" stroke-width="1.1"/></svg>
  <span class="t" style="top:356px;letter-spacing:-0.1px">General</span>
  <svg class="arr" style="top:360px" viewBox="0 0 7 11"><path d="M1.6 1.4 L5.6 5.5 L1.6 9.6" fill="none" stroke="#333" stroke-width="1.1"/></svg>
  <span class="t" style="top:380px;letter-spacing:0.2px">Rendering</span>
  <svg class="arr" style="top:384px" viewBox="0 0 7 11"><path d="M1.6 1.4 L5.6 5.5 L1.6 9.6" fill="none" stroke="#333" stroke-width="1.1"/></svg>
  <span class="t" style="top:404px;letter-spacing:0.63px">Animation</span>
  <svg class="arr" style="top:408px" viewBox="0 0 7 11"><path d="M1.6 1.4 L5.6 5.5 L1.6 9.6" fill="none" stroke="#333" stroke-width="1.1"/></svg>
  <span class="t" style="top:428px;letter-spacing:0.65px">Audio</span>
  <svg class="arr" style="top:432px" viewBox="0 0 7 11"><path d="M1.6 1.4 L5.6 5.5 L1.6 9.6" fill="none" stroke="#333" stroke-width="1.1"/></svg>
  <span class="t" style="top:452px;letter-spacing:0.05px">Sequencing</span>
  <svg class="arr" style="top:456px" viewBox="0 0 7 11"><path d="M1.6 1.4 L5.6 5.5 L1.6 9.6" fill="none" stroke="#333" stroke-width="1.1"/></svg>
  <span class="t" style="top:476px;letter-spacing:-0.13px">Analysis</span>
  <svg class="arr" style="top:480px" viewBox="0 0 7 11"><path d="M1.6 1.4 L5.6 5.5 L1.6 9.6" fill="none" stroke="#333" stroke-width="1.1"/></svg>
  <span class="t" style="top:500px">2D</span>
  <svg class="arr" style="top:504px" viewBox="0 0 7 11"><path d="M1.6 1.4 L5.6 5.5 L1.6 9.6" fill="none" stroke="#333" stroke-width="1.1"/></svg>
  <span class="t" style="top:524px;letter-spacing:1.5px">AI</span>
  <svg class="arr" style="top:528px" viewBox="0 0 7 11"><path d="M1.6 1.4 L5.6 5.5 L1.6 9.6" fill="none" stroke="#333" stroke-width="1.1"/></svg>
  <span class="t" style="top:548px;letter-spacing:0.22px">UI Toolkit</span>
  <svg class="arr" style="top:552px" viewBox="0 0 7 11"><path d="M1.6 1.4 L5.6 5.5 L1.6 9.6" fill="none" stroke="#333" stroke-width="1.1"/></svg>
  <span class="t" style="top:572px;letter-spacing:0.17px">Visual Scripting</span>
  <svg class="arr" style="top:576px" viewBox="0 0 7 11"><path d="M1.6 1.4 L5.6 5.5 L1.6 9.6" fill="none" stroke="#333" stroke-width="1.1"/></svg>
</div>

<!-- ============ RED HIGHLIGHTS ============ -->
<div class="abs" style="left:360px;top:1px;width:83px;height:35px;border:4px solid #e81123"></div>
<div class="abs" style="left:363px;top:256px;width:323px;height:30px;border:4px solid #e81123"></div>

</body>
</html>
